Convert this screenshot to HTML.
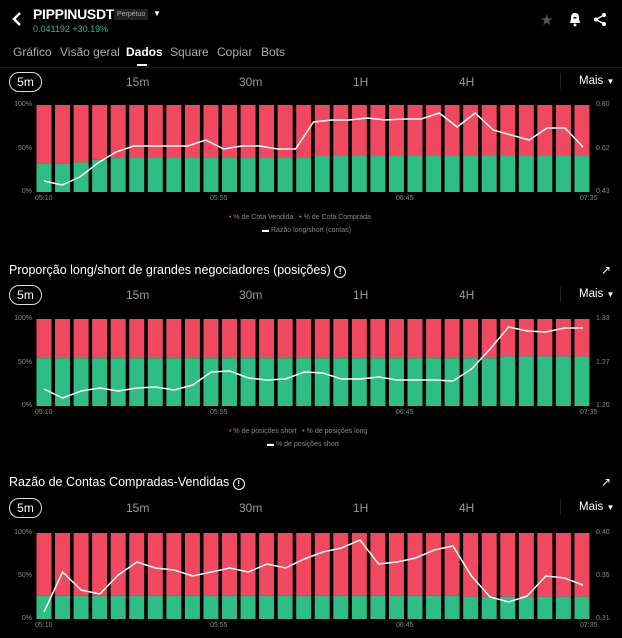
<!DOCTYPE html><html><head><meta charset="utf-8"><style>
body{margin:0;width:622px;height:638px;background:#000;overflow:hidden;font-family:"Liberation Sans",sans-serif;color:#fff;position:relative}
.a{position:absolute;white-space:nowrap}
.tf{font-size:12px;color:#999}
.sm{font-size:7px;color:#888}
.pill{position:absolute;left:9px;width:31px;height:18px;border:1px solid #ddd;border-radius:10px;font-size:12px;text-align:center;line-height:18px}
</style></head><body>
<svg class="a" style="left:10px;top:10px" width="14" height="18"><path d="M10 3 L4 9 L10 15" stroke="#fff" stroke-width="2.4" fill="none"/></svg>
<div class="a" style="left:33px;top:6px;font-size:14px;font-weight:bold;letter-spacing:-0.3px">PIPPINUSDT</div>
<div class="a" style="left:114px;top:9px;font-size:7px;color:#aaa;background:#222;padding:2px 3px">Perpétuo</div>
<div class="a" style="left:153px;top:9px;font-size:8px">▼</div>
<div class="a" style="left:33px;top:24px;font-size:9px;color:#2ebd85">0.041192 +30.19%</div>
<div class="a" style="left:540px;top:11px;font-size:15px;color:#555">★</div>
<svg class="a" style="left:568px;top:12px" width="14" height="15"><path d="M7 1 C3 1 3 4 3 7 L2 11 H12 L11 7 C11 4 11 1 7 1Z" fill="#fff"/><rect x="5.5" y="5" width="3" height="1.5" fill="#000"/><circle cx="7" cy="13" r="1.5" fill="#fff"/></svg>
<svg class="a" style="left:593px;top:12px" width="14" height="15"><circle cx="11" cy="3" r="2" fill="#fff"/><circle cx="3" cy="7.5" r="2" fill="#fff"/><circle cx="11" cy="12" r="2" fill="#fff"/><path d="M11 3 L3 7.5 L11 12" stroke="#fff" stroke-width="1.5" fill="none"/></svg>
<div class="a" style="top:45px;left:13px;font-size:12px;color:#aaa">Gráfico</div>
<div class="a" style="top:45px;left:60px;font-size:12px;color:#aaa">Visão geral</div>
<div class="a" style="top:45px;left:126px;font-size:12px;font-weight:bold">Dados</div>
<div class="a" style="top:45px;left:170px;font-size:12px;color:#aaa">Square</div>
<div class="a" style="top:45px;left:217px;font-size:12px;color:#aaa">Copiar</div>
<div class="a" style="top:45px;left:261px;font-size:12px;color:#aaa">Bots</div>
<div class="a" style="top:64px;left:137px;width:10px;height:2px;background:#fff"></div>
<div class="a" style="top:67px;left:0;width:622px;height:1px;background:#1a1a1a"></div>

<div class="a" style="left:9px;top:263px;font-size:12.5px">Proporção long/short de grandes negociadores (posições) <span style="display:inline-block;width:10px;height:10px;border:1.3px solid #fff;border-radius:50%;font-size:8px;text-align:center;line-height:10px;font-weight:bold">!</span></div>
<div class="a" style="left:9px;top:475px;font-size:12.5px">Razão de Contas Compradas-Vendidas <span style="display:inline-block;width:10px;height:10px;border:1.3px solid #fff;border-radius:50%;font-size:8px;text-align:center;line-height:10px;font-weight:bold">!</span></div>
<div class="a" style="left:601px;top:263px;font-size:12px">↗</div>
<div class="a" style="left:601px;top:475px;font-size:12px">↗</div>
<div id="root"></div>
<script>
const P=[
{tf:72,top:105,bot:192,r:["0.80","0.62","0.43"],g:[33,33,34,37,39,40,40,40,40,40,40,40,40,40,40,42,42,42,42,42,42,42,42,42,42,42,42,42,42,42],
l:[181,185,177,163,152,146,146,146,146,140,149,146,146,149,149,122,120,120,118,120,119,119,113,127,113,130,135,140,128,128,147],
lg:["% de Cota Vendida","% de Cota Comprada","Razão long/short (contas)"],lx:[229,310,262]},
{tf:285,top:319,bot:406,r:["1.33","1.27","1.20"],g:[55,55,55,55,55,55,55,55,55,55,55,55,55,55,55,55,55,55,55,55,55,55,55,55,55,57,57,57,57,57],
l:[389,398,391,388,391,388,387,390,385,372,371,378,380,379,372,373,379,379,377,380,380,380,381,369,349,327,331,332,328,328],
lg:["% de posições short","% de posições long","% de posições short"],lx:[229,318,267]},
{tf:498,top:533,bot:619,r:["0.40","0.35","0.31"],g:[27,27,27,27,27,27,27,27,27,27,27,27,27,27,27,27,27,27,27,27,27,27,27,26,26,26,26,26,26,26],
l:[612,572,590,594,575,562,568,570,576,572,568,572,564,568,559,552,548,540,564,562,558,550,546,576,597,602,596,576,578,585],
lg:[]}];
let h='';
P.forEach(c=>{
 h+=`<div class="pill" style="top:${c.tf}px">5m</div>`;
 [["15m",126],["30m",239],["1H",353],["4H",459]].forEach(t=>h+=`<div class="a tf" style="left:${t[1]}px;top:${c.tf+3}px">${t[0]}</div>`);
 h+=`<div class="a" style="left:560px;top:${c.tf+1}px;width:1px;height:16px;background:#222"></div><div class="a" style="left:579px;top:${c.tf+3}px;font-size:11.5px">Mais <span style="font-size:8px">▼</span></div>`;
 const H=c.bot-c.top;let s=`<svg class="a" style="left:0;top:0" width="622" height="638">`;
 for(let i=0;i<30;i++){const x=36.5+i*18.55,gy=c.bot-H*c.g[i]/100;
  s+=`<rect x="${x}" y="${c.top}" width="15" height="${gy-c.top}" fill="#f0495f"/><rect x="${x}" y="${gy}" width="15" height="${c.bot-gy}" fill="#2ebd85"/>`;}
 const n=c.l.length,st=(583-44)/(n-1);
 s+=`<polyline points="${c.l.map((y,i)=>(44+i*st).toFixed(1)+','+y).join(' ')}" fill="none" stroke="#fff" stroke-width="1.5"/></svg>`;
 h+=s;
 [["100%",c.top],["50%",c.top+H/2],["0%",c.bot]].forEach((t,i)=>h+=`<div class="a sm" style="right:590px;top:${t[1]-4}px">${t[0]}</div>`);
 c.r.forEach((t,i)=>h+=`<div class="a sm" style="left:596px;top:${c.top+i*H/2-4}px">${t}</div>`);
 [["05:10",35],["05:55",210],["06:45",396],["07:35",580]].forEach(t=>h+=`<div class="a sm" style="left:${t[1]}px;top:${c.bot+3}px">${t[0]}</div>`);
 if(c.lg.length){h+=`<div class="a sm" style="left:${c.lx[0]}px;top:${c.bot+22}px"><span style="color:#f0495f">•</span> ${c.lg[0]} &nbsp; <span style="color:#2ebd85">•</span> ${c.lg[1]}</div><div class="a sm" style="left:${c.lx[2]}px;top:${c.bot+35}px"><span style="color:#fff">▬</span> ${c.lg[2]}</div>`;}
});
document.getElementById('root').innerHTML=h;
</script>
</body></html>
